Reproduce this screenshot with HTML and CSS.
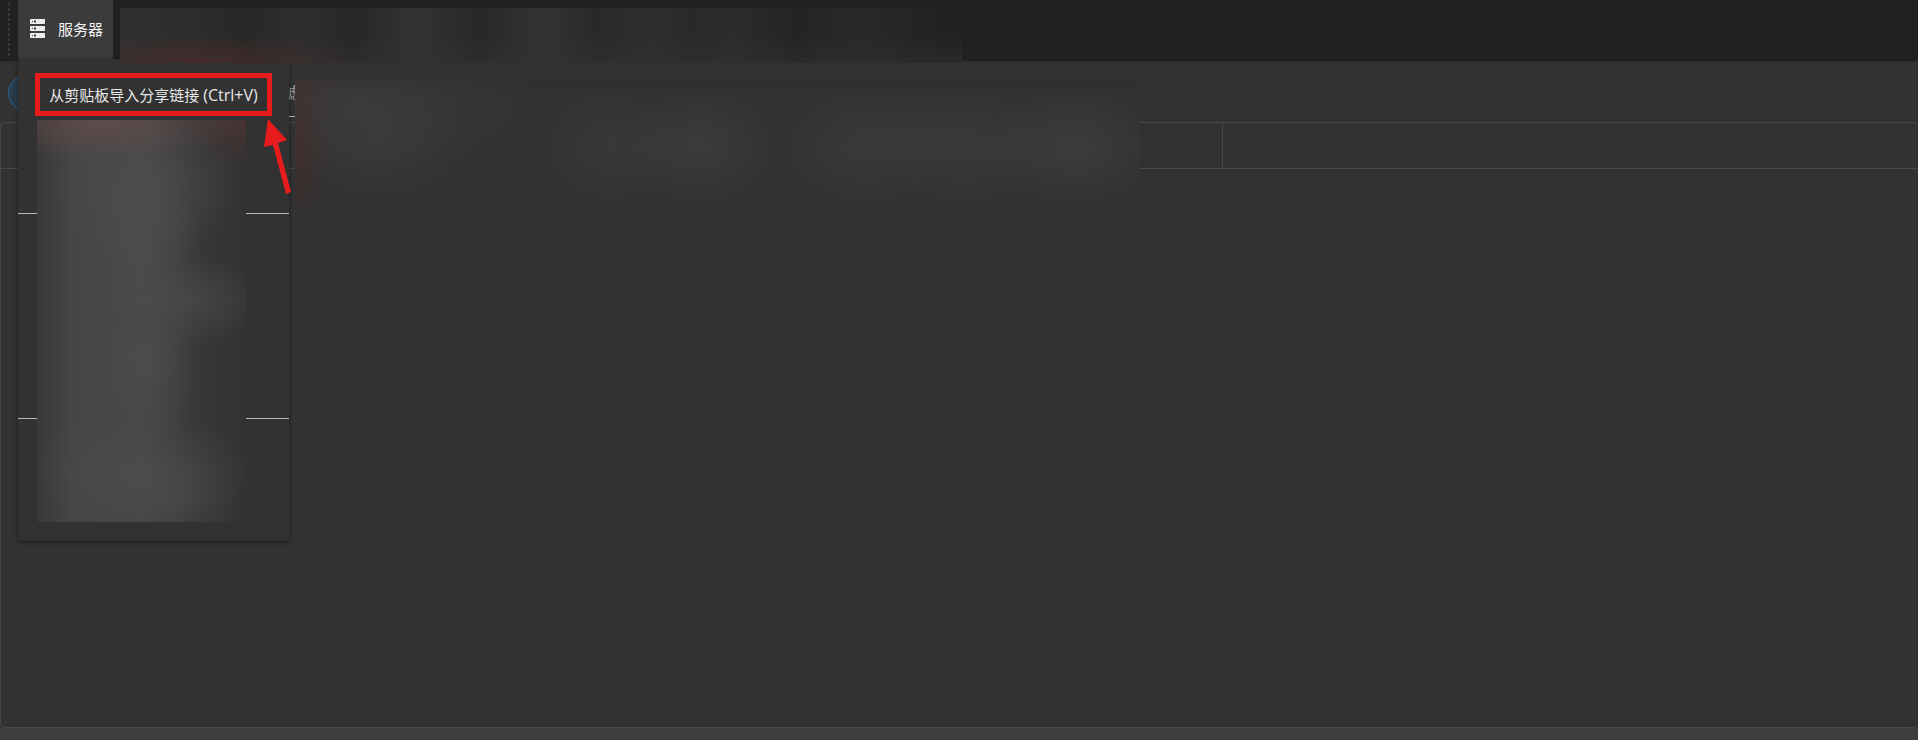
FILE: index.html
```html
<!DOCTYPE html>
<html lang="zh-CN">
<head>
    <meta charset="UTF-8"/>
    <title>服务器</title>
    <meta name="viewport" content="width=device-width, initial-scale=1"/>
    <link rel="stylesheet" href="styles.css">
</head>
<body>
    <header class="toolbar">
        <div class="toolbar-grip"></div>
        <div class="server">
            <button class="server-button" type="button">
                <svg class="server-icon" viewBox="0 0 15 19" aria-hidden="true">
                    <path fill="#ececec" d="M.5 0h14l.5.5v4l-.5.5H.5L0 4.500v-4zM.5 7h14l.5.5v4l-.5.5H.5l-.5-.5v-4zM.5 14h14l.5.5v4l-.5.5H.5l-.5-.5v-4z"/>
                    <path fill="#3b3b3b" d="M2 2h1v1H2zM4 1.500h2v2H4zM2 9h1v1H2zM4 8.500h2v2H4zM2 16h1v1H2zM4 15.500h2v2H4z"/>
                </svg>
                <span>服务器</span>
            </button>
            <div class="menu">
                <button class="menu-item" type="button">从剪贴板导入分享链接 <span class="shortcut">(Ctrl+V)</span></button>
                <div class="menu-group menu-group-short"></div>
                <hr class="menu-separator"/>
                <div class="menu-group menu-group-long"></div>
                <hr class="menu-separator"/>
                <div class="menu-group menu-group-last"></div>
                <div class="veil veil-menu"></div>
                <svg class="arrow" viewBox="0 0 30 76" aria-hidden="true">
                    <path fill="#e81c1c" d="M6 0l19 21-9 3 13 49-5 2-13-49-9 2z"/>
                </svg>
            </div>
        </div>
        <div class="veil veil-toolbar"></div>
    </header>
    <main class="content">
        <div class="filter-bar">
            <button class="round-button" type="button" aria-label="订阅"></button>
            <input class="filter-input" type="text" placeholder="滤" aria-label="滤"/>
        </div>
        <section class="server-list">
            <div class="list-header">
                <div class="list-column"></div>
                <div class="list-column"></div>
            </div>
        </section>
        <div class="veil veil-list"></div>
    </main>
    <footer class="status-bar"></footer>
</body>
</html>
```

FILE: styles.css
```css
* {
    box-sizing: border-box;
}

body {
    display: flex;
    flex-direction: column;
    min-height: 100vh;
    margin: 0;
    overflow-x: hidden;
    background-color: #323232;
    color: #f4f4f4;
    font: 15px/20px 'Open Sans', 'Noto Sans CJK SC', sans-serif;
}

button, input {
    font: inherit;
    color: inherit;
    border: 0;
    padding: 0;
}

.toolbar {
    position: relative;
    z-index: 2;
    display: flex;
    height: 61px;
    background-color: #212121;
    box-shadow: 0 1px 0 #2c2c2c;
}

.toolbar-grip {
    width: 2px;
    margin: 3px 8px 4px;
    background: repeating-linear-gradient(#373737 0 3px, transparent 3px 5px);
}

.server {
    position: relative;
}

.server-button {
    display: flex;
    align-items: center;
    gap: 13px;
    width: 95px;
    height: 59px;
    padding: 0 0 2px 12px;
    background-color: #3b3b3b;
    border-radius: 0 0 2px 2px;
}

.server-icon {
    width: 15px;
    height: 19px;
}

.menu {
    position: absolute;
    top: 59px;
    left: 0;
    display: flex;
    flex-direction: column;
    width: 271px;
    padding: 14px 0 16px;
    background-color: #323232;
    border-radius: 2px;
    box-shadow: 0 1px 4px rgba(0, 0, 0, .5);
}

.menu-item {
    height: 43px;
    margin: 0 17px;
    border: 5px solid #e81c1c;
    background-color: #323232;
    color: #e8e8e8;
    white-space: nowrap;
}

.shortcut {
    font-size: 16px;
}

.menu-group-short {
    height: 97px;
}

.menu-group-long {
    height: 204px;
}

.menu-group-last {
    height: 106px;
}

.menu-separator {
    width: 100%;
    height: 1px;
    margin: 0;
    border: 0;
    background-color: #b4bcc0;
}

.arrow {
    position: absolute;
    top: 60px;
    left: 244px;
    width: 30px;
    height: 76px;
}

/* frosted covers over the private parts of the window */
.veil {
    position: absolute;
}

.veil-toolbar {
    top: 8px;
    left: 120px;
    width: 842px;
    height: 55px;
    background:
        radial-gradient(170px 30px at 80px 100%, rgba(90, 40, 40, .5), transparent),
        linear-gradient(transparent 50%, rgba(50, 50, 50, .5)),
        linear-gradient(90deg, #303030, #2d2d2d 70px, #272727 125px, #2e2e2e 180px, #272727 232px, #333 296px, #282828 358px, #333 424px, #292929 478px, #2e2e2e 530px, #292929 573px, #2c2c2c 615px, #242424 675px, #292929 740px, #222 820px);
}

.veil-menu {
    top: 61px;
    left: 19px;
    width: 209px;
    height: 402px;
    background:
        radial-gradient(160px 40px at 60px 0, rgba(125, 80, 80, .45), transparent),
        radial-gradient(60px 50px at 100% 0, rgba(110, 50, 50, .35), transparent),
        radial-gradient(90px 80px at 110px 65px, rgba(80, 80, 80, .7), transparent),
        radial-gradient(60px 80px at 108px 132px, rgba(80, 80, 80, .6), transparent),
        radial-gradient(60px 90px at 108px 240px, rgba(80, 80, 80, .6), transparent),
        radial-gradient(80px 44px at 150px 180px, rgba(74, 74, 74, .8), transparent),
        radial-gradient(110px 60px at 105px 350px, rgba(78, 78, 78, .7), transparent),
        radial-gradient(80px 50px at 130px 380px, rgba(74, 74, 74, .6), transparent),
        linear-gradient(90deg, #393939, #464646 18%, #464646 52%, #383838 75%, #323232);
}

.veil-list {
    top: 18px;
    left: 295px;
    width: 844px;
    height: 130px;
    background:
        radial-gradient(36px 90px at 0 70px, rgba(90, 35, 35, .35), transparent),
        radial-gradient(60px 50px at 0 0, rgba(80, 50, 50, .3), transparent),
        radial-gradient(180px 70px at 60px 25px, rgba(66, 66, 66, .5), transparent),
        radial-gradient(90px 60px at 85px 65px, rgba(66, 66, 66, .4), transparent),
        radial-gradient(70px 60px at 316px 67px, rgba(66, 66, 66, .4), transparent),
        radial-gradient(80px 60px at 403px 67px, rgba(66, 66, 66, .6), transparent),
        radial-gradient(90px 60px at 574px 67px, rgba(66, 66, 66, .5), transparent),
        radial-gradient(90px 60px at 670px 67px, rgba(66, 66, 66, .5), transparent),
        radial-gradient(90px 60px at 778px 67px, rgba(66, 66, 66, .65), transparent),
        linear-gradient(#303030, #323232 20px);
}

.content {
    position: relative;
    display: flex;
    flex: 1;
    flex-direction: column;
}

.filter-bar {
    display: flex;
    height: 61px;
    padding: 14px 8px 0;
}

.round-button {
    width: 36px;
    height: 36px;
    border: 1px solid #2b6595;
    border-radius: 50%;
    background-color: #293c4c;
}

.filter-input {
    width: 400px;
    height: 42px;
    margin-left: 229px;
    padding: 0 12px 8px;
    border-bottom: 1px solid #b4b4b4;
    background-color: transparent;
}

.filter-input::placeholder {
    color: #a0a0a0;
}

.server-list {
    flex: 1;
    border: 1px solid #484848;
    border-right: 0;
    border-radius: 5px;
}

.list-header {
    display: flex;
    height: 46px;
    border-bottom: 1px solid #484848;
}

.list-column:first-child {
    width: 1222px;
    border-right: 1px solid #484848;
}

.status-bar {
    height: 12px;
    background-color: #3d3d3d;
}
```
